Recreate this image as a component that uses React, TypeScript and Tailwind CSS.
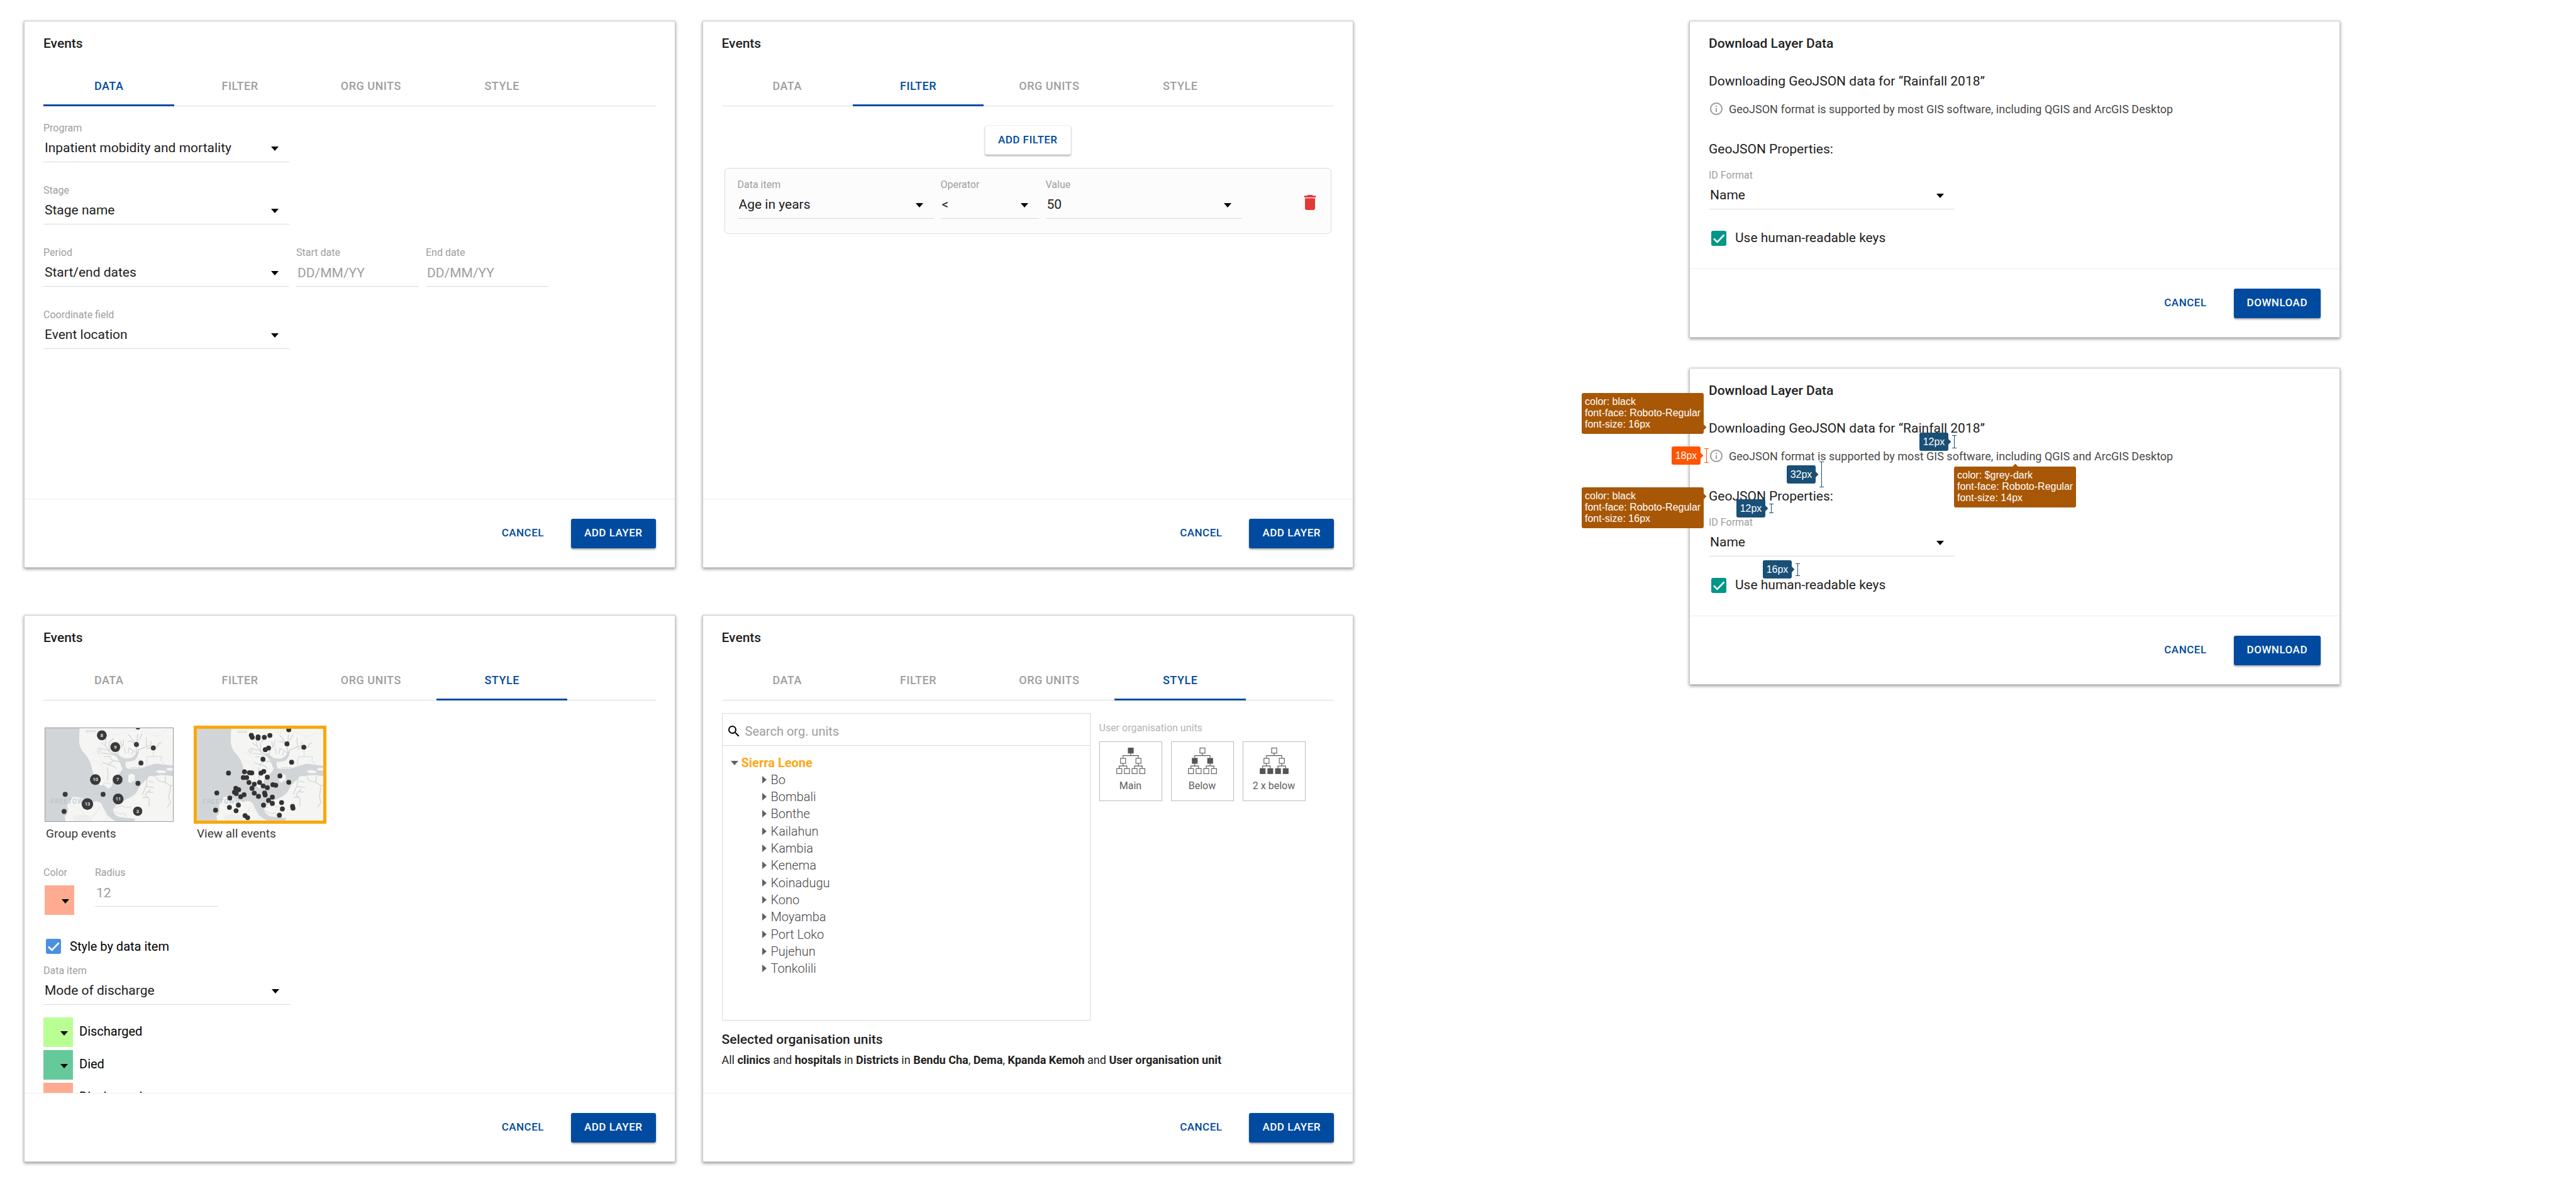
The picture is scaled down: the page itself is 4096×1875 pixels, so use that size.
import { useId, type ReactNode } from 'react';

const TABS = ['DATA', 'FILTER', 'ORG UNITS', 'STYLE'];

function Caret({ className = '' }: { className?: string }) {
  return (
    <svg viewBox="0 0 12 7" className={`pointer-events-none absolute h-[7px] w-3 ${className}`} aria-hidden="true">
      <path d="M0 0h12L6 7z" fill="#000" />
    </svg>
  );
}

function Field({ label, id, className, children }: { label: string; id: string; className: string; children: ReactNode }) {
  return (
    <div className={`flex shrink-0 flex-col ${className}`}>
      <label htmlFor={id} className="h-5 text-[16px] leading-5 whitespace-nowrap text-[#9e9e9e]">
        {label}
      </label>
      <div className="relative h-11 border-b border-[#dadada]">{children}</div>
    </div>
  );
}

function SelectField({ label, value, className = 'w-[391px]' }: { label: string; value: string; className?: string }) {
  const id = useId();
  return (
    <Field label={label} id={id} className={className}>
      <select id={id} className="h-full w-full appearance-none bg-transparent pl-0.5 text-[21px] text-[#212121] outline-none">
        <option>{value}</option>
      </select>
      <Caret className="top-[19px] right-[17px]" />
    </Field>
  );
}

function TextField({ label, placeholder, value }: { label: string; placeholder?: string; value?: string }) {
  const id = useId();
  return (
    <Field label={label} id={id} className="w-[195px]">
      <input
        id={id}
        type="text"
        placeholder={placeholder}
        defaultValue={value}
        className="h-full w-full bg-transparent pl-0.5 text-[21px] text-[#9e9e9e] outline-none placeholder:text-[#9e9e9e]"
      />
    </Field>
  );
}

function Checkbox({ label, color }: { label: string; color: string }) {
  return (
    <label className="flex h-6 items-center gap-[14px] pl-1">
      <span className="relative flex h-6 w-6">
        <input type="checkbox" defaultChecked className={`h-6 w-6 appearance-none rounded-[3px] ${color}`} />
        <svg viewBox="0 0 24 24" className="pointer-events-none absolute inset-0 h-6 w-6" aria-hidden="true">
          <path d="M4 12.5l5.5 5.5L20.500 6.500" fill="none" stroke="#fff" strokeWidth="2.600" />
        </svg>
      </span>
      {label}
    </label>
  );
}

function Swatch({ label, color }: { label: string; color: string }) {
  return (
    <button type="button" aria-label={label} className={`relative h-[47px] w-[47px] shrink-0 ${color}`}>
      <Caret className="top-[22px] right-2" />
    </button>
  );
}

function Dialog({ title, action, children }: { title: string; action: string; children: ReactNode }) {
  return (
    <section className="flex flex-col border border-[#c8c8c8] bg-white shadow-[0_2px_5px_rgba(0,0,0,0.42)]">
      <h2 className="mt-5 px-[30px] text-[21px] leading-[30px] font-medium">{title}</h2>
      {children}
      <footer className="flex h-[109px] items-center justify-end gap-[22px] border-t border-[#ebedf0] px-[30px] text-[17px] font-medium tracking-[0.5px]">
        <button type="button" className="h-[47px] px-[21px] text-[#004ba0]">
          CANCEL
        </button>
        <button type="button" className="h-[47px] rounded-[3px] bg-[#004ba0] px-[21px] text-white shadow-[0_2px_3px_rgba(0,0,0,0.35)]">
          {action}
        </button>
      </footer>
    </section>
  );
}

function EventsDialog({ active, children }: { active: string; children: ReactNode }) {
  return (
    <Dialog title="Events" action="ADD LAYER">
      <nav className="mx-[30px] mt-[23px] flex border-b border-[#dadada]" role="tablist">
        {TABS.map((tab) => (
          <button
            key={tab}
            type="button"
            role="tab"
            aria-selected={tab === active}
            className={`-mb-px h-[62px] w-[21.4%] border-b-[3px] text-[18px] font-medium tracking-[0.5px] ${
              tab === active ? 'border-[#004ba0] text-[#004ba0]' : 'border-transparent text-[#9e9e9e]'
            }`}
          >
            {tab}
          </button>
        ))}
      </nav>
      <div className="h-[624px] overflow-hidden px-[30px]">{children}</div>
    </Dialog>
  );
}

function DataPanel() {
  return (
    <div className="flex flex-col gap-[35px] pt-[25px]">
      <SelectField label="Program" value="Inpatient mobidity and mortality" />
      <SelectField label="Stage" value="Stage name" />
      <div className="flex gap-[11px]">
        <SelectField label="Period" value="Start/end dates" />
        <TextField label="Start date" placeholder="DD/MM/YY" />
        <TextField label="End date" placeholder="DD/MM/YY" />
      </div>
      <SelectField label="Coordinate field" value="Event location" />
    </div>
  );
}

function FilterPanel() {
  return (
    <div className="flex flex-col items-center pt-[30px]">
      <button
        type="button"
        className="h-[47px] rounded-[3px] border border-[#f0f0f0] bg-white px-5 text-[17px] font-medium tracking-[0.5px] text-[#004ba0] shadow-[0_2px_3px_rgba(0,0,0,0.3)]"
      >
        ADD FILTER
      </button>
      <div className="mt-[21px] w-full px-1">
        <div className="flex h-[105px] gap-[11px] rounded-md border border-[#dadada] bg-[#fcfcfc] pt-4 pr-[17px] pl-5">
          <SelectField label="Data item" value="Age in years" className="w-[312px]" />
          <SelectField label="Operator" value="<" className="w-[156px]" />
          <SelectField label="Value" value="50" className="w-[312px]" />
          <button type="button" aria-label="Delete filter" className="mt-[22px] ml-auto h-8 w-8">
            <svg viewBox="0 0 24 24" className="h-8 w-8" fill="#e53935" aria-hidden="true">
              <path d="M6 19c0 1.100.9 2 2 2h8c1.100 0 2-.9 2-2V7H6v12zM19 4h-3.500l-1-1h-5l-1 1H5v2h14V4z" />
            </svg>
          </button>
        </div>
      </div>
    </div>
  );
}

const CLUSTERS: [number, number, number, string][] = [
  [475, 107, 36, '8'],
  [573, 193, 36, '9'],
  [428, 430, 39, '10'],
  [590, 430, 36, '7'],
  [594, 571, 39, '11'],
  [370, 608, 42, '13'],
  [736, 660, 34, '3'],
];

const SINGLES: [number, number][] = [
  [738, 47], [727, 174], [850, 199], [760, 309], [738, 457], [208, 537], [200, 662], [484, 537],
];

const POINTS: [number, number][] = [
  [461, 103], [468, 118], [511, 115], [511, 124], [557, 118], [598, 104], [737, 62], [724, 166], [848, 191],
  [758, 302], [588, 197], [564, 209], [547, 280], [293, 382], [411, 372], [447, 379], [464, 381], [532, 382],
  [553, 370], [402, 415], [427, 415], [579, 412], [672, 403], [737, 450], [444, 451], [483, 464], [522, 451],
  [548, 477], [579, 490], [620, 468], [641, 472], [466, 495], [347, 495], [368, 505], [337, 523], [350, 533],
  [207, 529], [383, 557], [408, 542], [483, 530], [514, 554], [559, 529], [563, 544], [616, 560], [588, 584],
  [616, 606], [551, 619], [684, 600], [690, 647], [668, 693], [765, 628], [768, 641], [303, 566], [300, 636],
  [366, 619], [349, 660], [198, 656], [415, 696], [434, 711],
];

function BaseMap() {
  return (
    <>
      <rect x="50" y="40" width="960" height="710" fill="#f5f5f3" />
      <g fill="#d1d5d8">
        <path d="M50 40H316Q306 110 312 172Q322 215 352 242Q392 290 402 345Q412 400 434 445Q455 478 490 470L520 496L548 480L556 430L590 392Q604 358 622 350Q612 300 580 262L566 232L590 240Q620 276 660 276Q712 276 728 228L746 214Q742 262 716 288Q680 302 650 298Q642 322 656 348Q690 358 752 352Q800 330 830 324Q868 308 908 318L1010 330V408L942 398Q880 394 856 408Q820 392 802 428Q748 470 732 516Q712 548 660 570Q590 596 556 644Q556 684 600 702L720 716L700 750H620Q548 726 516 690Q486 638 470 604Q440 576 400 598Q330 556 262 556Q240 590 222 620Q238 672 204 700L214 750H50Z" />
      </g>
      <g fill="#f5f5f3">
        <path d="M668 398l22-12 24 10 2 42-18 4-12 14-20-10z" />
        <path d="M868 370q24-18 70-2l4 12-48 4z" />
        <path d="M946 350q20-10 50-2v14q-30 6-50-4zM946 424q24-14 50-8v46q-40 2-50-14z" />
        <path d="M574 384q16-40 46-46l6 12q-14 36-44 44z" />
      </g>
      <g fill="none" stroke="#d1d5d8" strokeWidth="6" strokeLinejoin="round">
        <path d="M580 250L530 225 500 180 470 160M515 215L455 200 440 225M530 222L528 160 560 128M500 185L505 130M470 210L450 240M580 255L540 245 470 236M545 262L490 262" />
        <path d="M590 250L604 200 630 180 634 138M620 190L612 150M645 240L640 196" />
        <path d="M728 240L724 170 668 100M726 190L690 150 664 150M730 160L736 96M740 150L768 98M720 230L672 200 665 240M700 226L690 250M735 215L800 190 798 120M780 196L832 180 834 150M800 205L850 196 880 190 890 165 912 160" />
        <path d="M610 300L560 292 520 320 482 304M560 292L530 270M514 340L520 390 516 440M580 350L560 330 520 322" />
        <path d="M800 320L806 262 912 262 906 290 932 320M850 262V210M770 300L740 282" strokeWidth="4" />
        <path d="M806 410L800 470 770 540M816 440L850 450M800 480L858 490M830 500L790 540 820 570 818 626M800 520L850 522M810 560L772 560M940 400L936 450 976 476 962 560 975 600 950 632M936 450L890 440 870 410M976 476L995 470" />
        <path d="M560 640L620 620 640 632 690 630M560 660L600 680 640 676 650 700M470 490L500 450 540 462" strokeWidth="4" />
      </g>
      <path d="M390 724L425 680 460 630" fill="none" stroke="#eed6d6" strokeWidth="4" />
      <path d="M394 240Q440 225 460 260T480 330 490 440M395 286Q440 288 470 330M520 104Q600 110 680 74Q760 60 830 100T950 60M258 620L350 670M440 600L505 680 520 733" fill="none" stroke="#e9eaea" strokeWidth="4" />
      <path d="M262 700Q320 670 380 690L400 733H270Z" fill="#edefec" />
      <g fill="#b3c0cb" fontFamily="Roboto, sans-serif">
        <text x="104" y="606" fontSize="46" className="tracking-widest">FREETOWN</text>
        <text x="360" y="86" fontSize="24" opacity="0.7" className="tracking-wider">MAPE</text>
        <text x="684" y="356" fontSize="28" opacity="0.7" className="tracking-wider">PEPEL</text>
      </g>
    </>
  );
}

function StylePanel() {
  return (
    <div>
      <div className="flex gap-8 pt-10 pl-0.5">
        <button type="button" className="flex flex-col text-left">
          <svg viewBox="63 55 930 678" preserveAspectRatio="none" className="my-[3px] h-[150px] w-[205px] border border-[#999]" aria-hidden="true">
            <BaseMap />
            {SINGLES.map(([x, y]) => (
              <circle key={`${x}-${y}`} cx={x} cy={y} r="18" fill="#3a3a3a" />
            ))}
            {CLUSTERS.map(([x, y, r, n]) => (
              <g key={n}>
                <circle cx={x} cy={y} r={r} fill="#3a3a3a" />
                <text x={x} y={y + 12} textAnchor="middle" fontSize="34" fontWeight="500" fill="#fff" fontFamily="Roboto, sans-serif">
                  {n}
                </text>
              </g>
            ))}
          </svg>
          <span className="mt-1 pl-0.5 text-[19px] leading-6 text-[#3a3a3a]">Group events</span>
        </button>
        <button type="button" className="flex flex-col text-left">
          <svg viewBox="60 55 931 678" preserveAspectRatio="none" className="h-[156px] w-[211px] border-[5px] border-[#fba707]" aria-hidden="true">
            <BaseMap />
            {POINTS.map(([x, y]) => (
              <circle key={`${x}-${y}`} cx={x} cy={y} r="18" fill="#333" />
            ))}
          </svg>
          <span className="mt-1 pl-[5px] text-[19px] leading-6 text-[#3a3a3a]">View all events</span>
        </button>
      </div>
      <div className="mt-10 flex">
        <div className="flex w-[82px] flex-col gap-[10px]">
          <span className="h-5 text-[16px] leading-5 text-[#9e9e9e]">Color</span>
          <div className="flex pl-0.5">
            <Swatch label="Color" color="bg-[#ffab91]" />
          </div>
        </div>
        <TextField label="Radius" value="12" />
      </div>
      <div className="mt-[38px] text-[20px] text-black">
        <Checkbox label="Style by data item" color="bg-[#4a90e2]" />
      </div>
      <div className="mt-[17px]">
        <SelectField label="Data item" value="Mode of discharge" className="w-[392px]" />
      </div>
      <ul className="mt-5 flex flex-col gap-[5px] text-[20px] text-black">
        <li className="flex gap-[10px] leading-[44px]">
          <Swatch label="Discharged color" color="bg-[#b9ff94]" />
          Discharged
        </li>
        <li className="flex gap-[10px] leading-[44px]">
          <Swatch label="Died color" color="bg-[#66c99a]" />
          Died
        </li>
        <li className="flex gap-[10px] leading-[44px]">
          <Swatch label="Discharged color" color="bg-[#ffab91]" />
          Discharged
        </li>
      </ul>
    </div>
  );
}

const DISTRICTS = [
  'Bo', 'Bombali', 'Bonthe', 'Kailahun', 'Kambia', 'Kenema', 'Koinadugu', 'Kono', 'Moyamba', 'Port Loko', 'Pujehun', 'Tonkolili',
];

const NODES: [number, number, number][] = [
  [0, 86, 2], [1, 30, 77], [1, 142, 77], [2, 2, 152], [2, 58, 152], [2, 114, 152], [2, 170, 152],
];

function LevelButton({ label, level }: { label: string; level: number }) {
  return (
    <button type="button" className="flex h-[95px] w-[100px] flex-col items-center border border-[#bdbdbd] pt-[9px] text-[16px] leading-5 text-[#616161]">
      <svg viewBox="0 0 211 193" className="h-[42px] w-[46px]" aria-hidden="true">
        <g stroke="#555" strokeWidth="5">
          <path d="M105 40V58M49 77V58H161V77M49 116V134M21 152V134H77V152M161 116V134M133 152V134H189V152" fill="none" />
          {NODES.map(([l, x, y]) => (
            <rect key={`${x}-${y}`} x={x + 1} y={y + 1} width="37" height="37" fill={l === level ? '#555' : '#fff'} />
          ))}
        </g>
      </svg>
      <span className="mt-[9px]">{label}</span>
    </button>
  );
}

function OrgUnitsPanel() {
  return (
    <div className="pt-5">
      <div className="flex gap-[14px]">
        <div className="w-[586px] border border-[#dadada] pb-[68px]">
          <label className="flex h-[51px] items-center border-b border-[#dadada] pt-[6px] pl-[6px]">
            <svg viewBox="0 0 24 24" className="h-6 w-6" aria-hidden="true">
              <path d="M15.500 14h-.79l-.28-.27A6.470 6.470 0 0 0 16 9.500 6.500 6.500 0 1 0 9.500 16c1.610 0 3.090-.59 4.230-1.570l.27.28v.79l5 4.990L20.490 19l-4.990-5zm-6 0C7.010 14 5 11.990 5 9.500S7.010 5 9.500 5 14 7.010 14 9.500 11.990 14 9.500 14z" />
            </svg>
            <input
              type="text"
              aria-label="Search org. units"
              placeholder="Search org. units"
              className="h-full flex-1 bg-transparent pl-[6px] text-[20px] outline-none placeholder:text-[#9e9e9e]"
            />
          </label>
          <div className="mt-[14px] flex h-[26px] items-center gap-[5px] pl-[13px] text-[20px] font-bold text-[#ffa719]">
            <svg viewBox="0 0 12 7" className="h-[7px] w-3" aria-hidden="true">
              <path d="M0 0h12L6 7z" fill="#616161" />
            </svg>
            Sierra Leone
          </div>
          <ul className="flex h-[328px] flex-col pl-[63px] text-[20px] font-light text-[#444]">
            {DISTRICTS.map((name) => (
              <li key={name} className="flex flex-1 items-center gap-[7px] leading-none">
                <svg viewBox="0 0 7 12" className="h-3 w-[7px]" aria-hidden="true">
                  <path d="M0 0v12l7-6z" fill="#616161" />
                </svg>
                {name}
              </li>
            ))}
          </ul>
        </div>
        <div className="pt-[14px]">
          <p className="h-5 text-[16px] leading-5 text-[#b5b5b5]">User organisation units</p>
          <div className="mt-[11px] flex gap-[14px]">
            <LevelButton label="Main" level={0} />
            <LevelButton label="Below" level={1} />
            <LevelButton label="2 x below" level={2} />
          </div>
        </div>
      </div>
      <h3 className="mt-[15px] text-[21px] leading-[30px] font-medium">Selected organisation units</h3>
      <p className="mt-[5px] text-[18px] leading-[26px]">
        All <b>clinics</b> and <b>hospitals</b> in <b>Districts</b> in <b>Bendu Cha</b>, <b>Dema</b>, <b>Kpanda Kemoh</b> and{' '}
        <b>User organisation unit</b>
      </p>
    </div>
  );
}

function DownloadDialog() {
  return (
    <Dialog title="Download Layer Data" action="DOWNLOAD">
      <div className="px-[30px] pt-[30px] pb-9">
        <p className="text-[21px] leading-[30px]">Downloading GeoJSON data for “Rainfall 2018”</p>
        <p className="mt-[17px] flex h-6 items-center gap-2 text-[18px] text-[#494949]">
          <svg viewBox="0 0 24 24" className="h-6 w-6" fill="#9e9e9e" aria-hidden="true">
            <path d="M11 7h2v2h-2zm0 4h2v6h-2zm1-9C6.480 2 2 6.480 2 12s4.480 10 10 10 10-4.480 10-10S17.520 2 12 2zm0 18c-4.410 0-8-3.590-8-8s3.590-8 8-8 8 3.590 8 8-3.590 8-8 8z" />
          </svg>
          GeoJSON format is supported by most GIS software, including QGIS and ArcGIS Desktop
        </p>
        <p className="mt-[37px] mb-[17px] text-[21px] leading-[30px]">GeoJSON Properties:</p>
        <SelectField label="ID Format" value="Name" />
        <div className="mt-[34px] text-[21px]">
          <Checkbox label="Use human-readable keys" color="bg-[#009688]" />
        </div>
      </div>
    </Dialog>
  );
}

function StyleNote({ color, size, pointer, className }: { color: string; size: string; pointer: string; className: string }) {
  return (
    <div className={`absolute rounded-[3px] bg-[#a85706] px-[5px] pt-[5px] pb-[6px] leading-[18px] whitespace-nowrap text-white ${className}`}>
      <span className={`absolute h-[7px] w-[7px] rotate-45 bg-[#a85706] ${pointer}`} />
      <p>color: {color}</p>
      <p>font-face: Roboto-Regular</p>
      <p>font-size: {size}</p>
    </div>
  );
}

function SpacingNote({ label, beam, className, accent = false }: { label: string; beam: string; className: string; accent?: boolean }) {
  const fill = accent ? 'bg-[#ff5500]' : 'bg-[#1a4f76]';
  const border = accent ? 'border-[#ff5500]' : 'border-[#1a4f76]';
  return (
    <div className={`absolute flex items-center gap-[6px] ${className}`}>
      <div className={`relative flex h-[29px] w-[46px] items-center justify-center rounded-[3px] text-white ${fill}`}>
        <span className={`absolute top-[11px] right-[-3px] h-[7px] w-[7px] rotate-45 ${fill}`} />
        {label}
      </div>
      <div className={`flex w-[7px] justify-center border-y ${border} ${beam}`}>
        <div className={`w-px ${fill}`} />
      </div>
    </div>
  );
}

export default function App() {
  return (
    <main className="grid w-full grid-cols-[2114fr_534fr_1035fr_375fr] items-start bg-white pt-[33px] pb-[27px] pl-[38px] font-[Roboto,sans-serif] text-[#212121]">
      <div className="grid grid-cols-2 gap-x-[43px] gap-y-[75px]">
        <EventsDialog active="DATA">
          <DataPanel />
        </EventsDialog>
        <EventsDialog active="FILTER">
          <FilterPanel />
        </EventsDialog>
        <EventsDialog active="STYLE">
          <StylePanel />
        </EventsDialog>
        <EventsDialog active="STYLE">
          <OrgUnitsPanel />
        </EventsDialog>
      </div>
      <div className="col-start-3 flex flex-col gap-12">
        <DownloadDialog />
        <div className="relative">
          <DownloadDialog />
          <div className="font-['Liberation_Sans',sans-serif] text-[16px]">
            <StyleNote color="black" size="16px" className="top-10 left-[-171px]" pointer="right-[-3px] bottom-[7px]" />
            <StyleNote color="black" size="16px" className="top-[190px] left-[-171px]" pointer="right-[-3px] top-[11px]" />
            <StyleNote color="$grey-dark" size="14px" className="top-[157px] left-[421px]" pointer="top-[-3px] left-[94px]" />
            <SpacingNote label="12px" beam="h-[21px]" className="top-[103px] left-[366px]" />
            <SpacingNote label="18px" beam="h-[23px]" className="top-[125px] left-[-28px]" accent />
            <SpacingNote label="32px" beam="h-[41px]" className="top-[149px] left-[155px]" />
            <SpacingNote label="12px" beam="h-[15px]" className="top-[209px] left-[75px]" />
            <SpacingNote label="16px" beam="h-5" className="top-[306px] left-[117px]" />
          </div>
        </div>
      </div>
    </main>
  );
}
